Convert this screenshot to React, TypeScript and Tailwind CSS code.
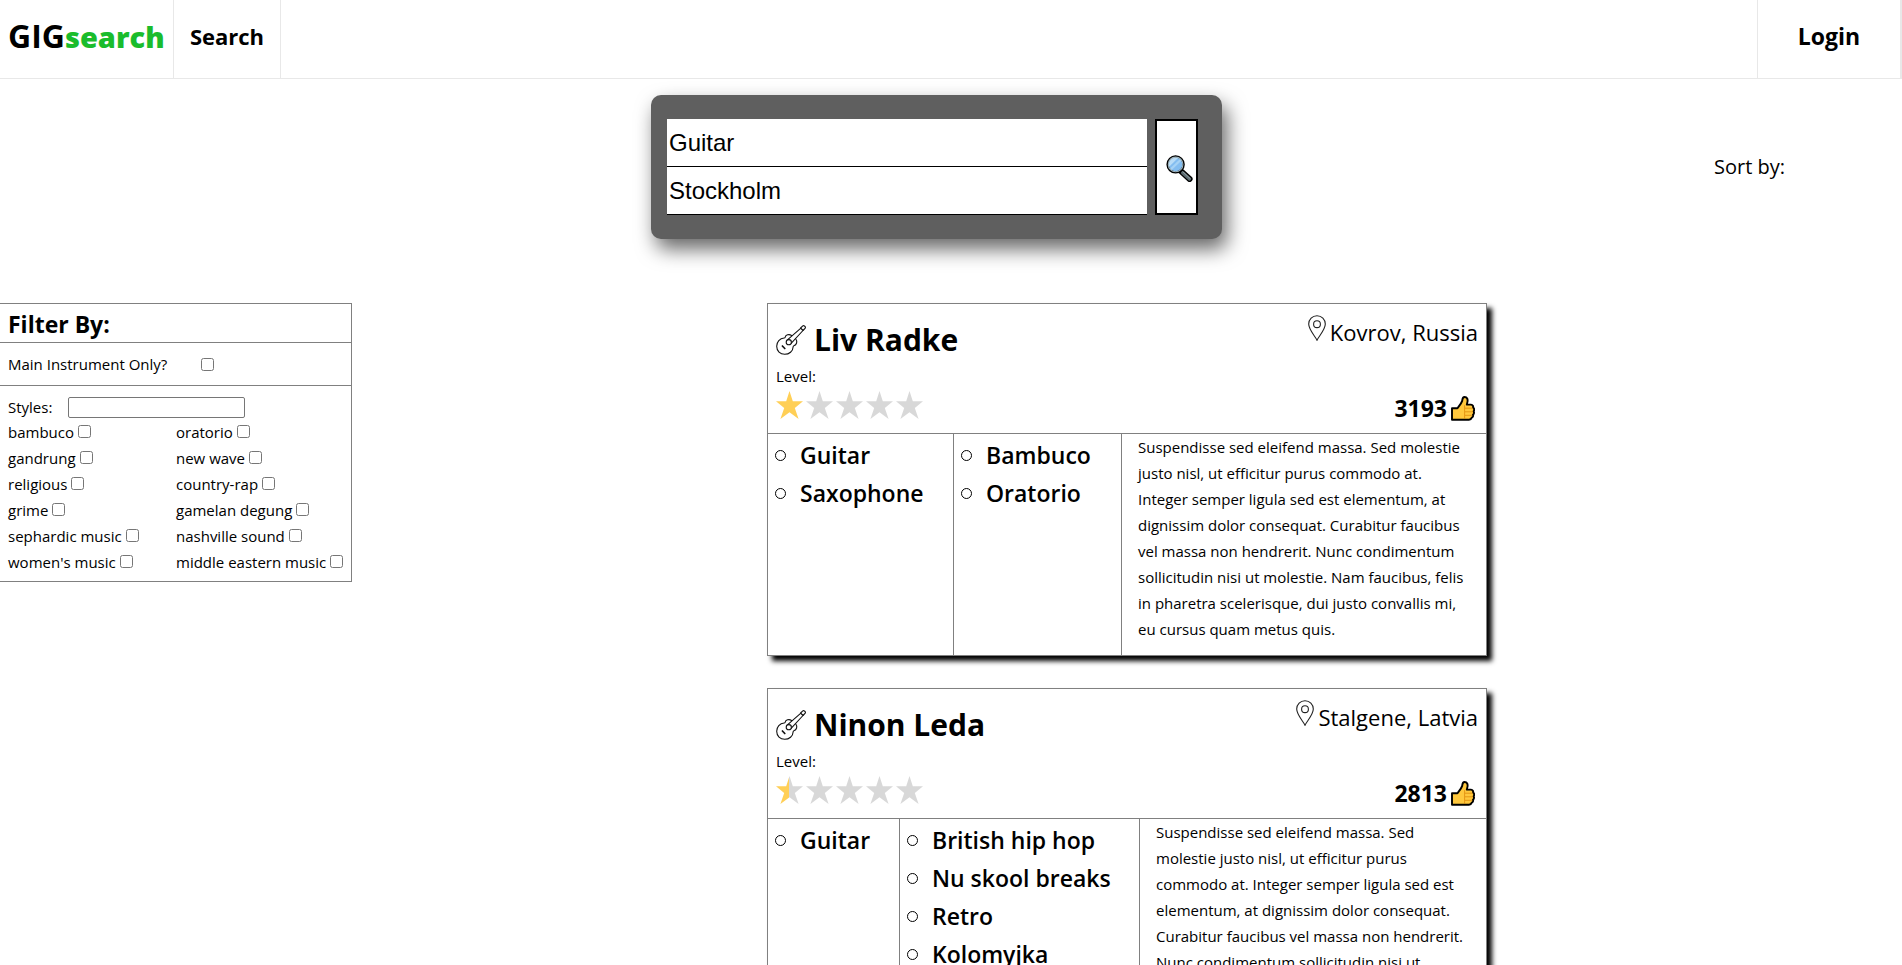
import React, { useId } from "react";

type Artist = {
  name: string;
  location: string;
  likes: number;
  level: number;
  instruments: string[];
  styles: string[];
  bio: string;
  columns: string;
};

const BIO =
  "Suspendisse sed eleifend massa. Sed molestie justo nisl, ut efficitur purus commodo at. Integer semper ligula sed est elementum, at dignissim dolor consequat. Curabitur faucibus vel massa non hendrerit. Nunc condimentum sollicitudin nisi ut molestie. Nam faucibus, felis in pharetra scelerisque, dui justo convallis mi, eu cursus quam metus quis.";

const artists: Artist[] = [
  {
    name: "Liv Radke",
    location: "Kovrov, Russia",
    likes: 3193,
    level: 1,
    instruments: ["Guitar", "Saxophone"],
    styles: ["Bambuco", "Oratorio"],
    bio: BIO,
    columns: "grid-cols-[186px_168px_1fr]",
  },
  {
    name: "Ninon Leda",
    location: "Stalgene, Latvia",
    likes: 2813,
    level: 0.5,
    instruments: ["Guitar"],
    styles: ["British hip hop", "Nu skool breaks", "Retro", "Kolomyjka"],
    bio: BIO,
    columns: "grid-cols-[132px_240px_1fr]",
  },
];

const styleFilters = [
  "bambuco",
  "oratorio",
  "gandrung",
  "new wave",
  "religious",
  "country-rap",
  "grime",
  "gamelan degung",
  "sephardic music",
  "nashville sound",
  "women's music",
  "middle eastern music",
];

function GuitarIcon() {
  return (
    <svg width="30" height="30" viewBox="0 0 30 30" fill="none" stroke="#111" strokeWidth="1.1" strokeLinecap="round" strokeLinejoin="round" aria-hidden="true">
      <path d="M15.6 10.4C12.8 8.8 9.7 9.9 9.1 12.3C9 12.8 8.6 13 8.1 13C3.8 13.2.7 16.8.7 21.2C.7 26 4.2 29.3 8.7 29.3C13.2 29.3 17 26.2 17.1 21.9C17.1 21.3 17.4 21 17.9 20.8C20.6 19.8 21.8 16.6 19.8 14" />
      <path d="M11.4 14.8L24.6 3.3M15.1 18.4L27 5.5" />
      <circle cx="12.8" cy="17.2" r="2.6" fill="#fff" />
      <path d="M24.6 3L26.8.9C27.4.4 28 .5 28.6 1.1L29 1.5C29.6 2.1 29.6 2.8 29 3.4L27 5.5Z" fill="#fff" />
      <path d="M6.4 21L8.8 23.5" strokeWidth="1.7" />
    </svg>
  );
}

function PinIcon() {
  return (
    <svg width="18" height="26" viewBox="0 0 18 26" fill="none" stroke="#222" strokeWidth="1.1" aria-hidden="true">
      <path d="M9 25.2C7.6 21.9.7 14.9.7 9.1C.7 4.2 4.4.7 9 .7C13.6.7 17.3 4.2 17.3 9.1C17.3 14.9 10.4 21.9 9 25.2Z" />
      <circle cx="9" cy="9.2" r="3.4" />
    </svg>
  );
}

function ThumbIcon() {
  return (
    <svg width="24" height="25" viewBox="0 0 24 25" aria-hidden="true">
      <path d="M1 12.2H6.4C8.3 9.8 10.4 7.5 11.2 4.9C11.4 3 11.4 1 13.6 1C16.2 1 16.9 3.4 16.5 5.6L15.8 8.6H20C21.9 8.6 22.4 10.5 22.1 11.6C23.3 12.6 23.3 14.3 22.6 15.3C23.3 16.6 22.9 18 22 18.8C22.4 20 21.8 21.2 20.8 21.7C20.3 23 19.6 23.8 18 23.8H1Z" fill="#ffc83d" stroke="#000" strokeWidth="1.9" strokeLinejoin="round" />
      <path d="M13.6 9.2V22.8M14 12.2H21.6M14 15.8H22M14 19.3H21.2" stroke="#d67d00" strokeWidth="0.9" fill="none" opacity="0.75" />
    </svg>
  );
}

function MagnifierIcon() {
  return (
    <svg width="27" height="27" viewBox="0 0 27 27" aria-hidden="true">
      <path d="M15.2 16.4L23.6 24" stroke="#000" strokeWidth="6" strokeLinecap="round" />
      <path d="M16.6 17.8L23.5 24" stroke="#5c6b70" strokeWidth="3.2" strokeLinecap="round" />
      <path d="M17 17L24 23.4" stroke="#8f9da1" strokeWidth="1" strokeLinecap="round" />
      <circle cx="9.6" cy="9.4" r="8" fill="#83bdf0" stroke="#000" strokeWidth="2.4" />
      <path d="M3.1 11.8L12 3C8.6 1.6 4.9 3 3.3 6.2C2.5 8 2.4 10 3.1 11.8Z" fill="#b8dcf7" />
      <path d="M5.5 15.2L15.6 5.6L14 4L4 13.4Z" fill="#a5d2f5" />
      <circle cx="9.6" cy="9.4" r="7.3" fill="none" stroke="#9fb4bd" strokeWidth="1.1" />
    </svg>
  );
}

function Star({ fill }: { fill: number }) {
  const id = useId();
  const offset = `${fill * 100}%`;
  return (
    <svg width="27" height="28" viewBox="0 0 27 28" aria-hidden="true">
      <defs>
        <linearGradient id={id}>
          <stop offset={offset} stopColor="#ffcf56" />
          <stop offset={offset} stopColor="#d8d8d8" />
        </linearGradient>
      </defs>
      <path d="M13.5 0L16.8 10.3H27L18.8 16.9L22.6 28L13.5 21.3L4.4 28L8.2 16.9L0 10.3H10.2Z" fill={`url(#${id})`} />
    </svg>
  );
}

function CircleList({ items }: { items: string[] }) {
  return (
    <ul className="border-r border-[#808080] pt-[2px] pl-[7px] text-[23px] leading-[38px] font-semibold">
      {items.map((item) => (
        <li key={item} className="flex items-center gap-[14px] whitespace-nowrap">
          <span className="size-[11px] rounded-full border border-black" />
          {item}
        </li>
      ))}
    </ul>
  );
}

function ArtistCard({ artist }: { artist: Artist }) {
  return (
    <article className="w-full max-w-[720px] border border-[#808080] bg-white shadow-[5px_5px_5px_#000]">
      <header className="flex justify-between border-b border-[#808080] px-2 pb-2">
        <div className="pt-[13px] pb-[6px]">
          <h2 className="flex items-center gap-2 text-[30px] leading-[46px] font-bold">
            <GuitarIcon />
            {artist.name}
          </h2>
          <p className="text-[15px] leading-[26px]">Level:</p>
          <div className="flex gap-[3px] pt-[2px]" role="img" aria-label={`${artist.level} of 5`}>
            {[0, 1, 2, 3, 4].map((i) => (
              <Star key={i} fill={Math.max(0, Math.min(1, artist.level - i))} />
            ))}
          </div>
        </div>
        <div className="flex flex-col items-end justify-between pt-[11px]">
          <p className="flex items-start gap-1 text-[22px] leading-[34px]">
            <PinIcon />
            {artist.location}
          </p>
          <button type="button" className="flex items-center gap-1 pr-[3px] text-[23px] leading-[34px] font-bold">
            {artist.likes}
            <ThumbIcon />
          </button>
        </div>
      </header>
      <div className={`grid ${artist.columns}`}>
        <CircleList items={artist.instruments} />
        <CircleList items={artist.styles} />
        <p className="px-4 pb-[13px] text-[15px] leading-[26px]">{artist.bio}</p>
      </div>
    </article>
  );
}

const checkbox = "size-[13px] shrink-0";

export default function App() {
  return (
    <div className="h-screen overflow-hidden bg-white font-['Open_Sans',sans-serif] text-black">
      <nav className="flex h-[79px] items-stretch border-b border-[#e8e8e8]">
        <a href="#home" className="flex w-[174px] items-center border-r border-[#e8e8e8] pb-[6px] pl-2 text-[32px] font-bold">
          <span className="flex items-baseline">
            GIG<span className="text-[29px] font-extrabold text-[#1abc2c]">search</span>
          </span>
        </a>
        <a href="#search" className="flex w-[107px] items-center justify-center border-r border-[#e8e8e8] pb-[6px] text-[22px] font-bold">
          Search
        </a>
        <a href="#login" className="ml-auto flex w-[145px] items-center justify-center border-r-2 border-l border-[#e8e8e8] pb-[6px] text-[23px] font-bold">
          Login
        </a>
      </nav>

      <div className="grid grid-cols-[1fr_571px_1fr] items-center pt-4 pr-[29px]">
        <div />
        <form className="flex gap-2 rounded-[10px] bg-[#5f5f5f] py-6 pr-6 pl-4 shadow-[5px_10px_20px_rgba(0,0,0,0.6)]" onSubmit={(e) => e.preventDefault()}>
          <div className="flex flex-1 flex-col font-['Liberation_Sans',sans-serif] text-[24px]">
            <input aria-label="Instrument" defaultValue="Guitar" className="h-12 border-b border-black bg-white px-[2px]" />
            <input aria-label="Location" defaultValue="Stockholm" className="h-12 border-b border-black bg-white px-[2px]" />
          </div>
          <button type="submit" aria-label="Search" className="flex w-[43px] items-center justify-end border-2 border-black bg-white pt-[2px] pr-[3px]">
            <MagnifierIcon />
          </button>
        </form>
        <p className="pr-[88px] text-right text-[20px]">Sort by:</p>
      </div>

      <div className="flex items-start pt-16">
        <aside className="w-[352px] shrink-0 border-y border-r border-[#808080] text-[15px]">
          <h2 className="border-b border-[#808080] pt-[2px] pl-2 text-[23px] leading-[36px] font-bold">Filter By:</h2>
          <div className="flex h-[43px] items-center gap-[34px] border-b border-[#808080] pl-2">
            <label htmlFor="main-only">Main Instrument Only?</label>
            <input id="main-only" type="checkbox" className={checkbox} />
          </div>
          <div className="px-2 pt-[10px] pb-[6px]">
            <div className="flex items-center gap-4">
              <label htmlFor="styles">Styles:</label>
              <input id="styles" type="text" className="h-[21px] w-[177px] rounded-[2px] border border-[#767676]" />
            </div>
            <div className="grid grid-cols-[168px_1fr]">
              {styleFilters.map((s) => (
                <label key={s} className="flex items-center gap-1 leading-[26px] whitespace-nowrap">
                  {s}
                  <input type="checkbox" className={checkbox} />
                </label>
              ))}
            </div>
          </div>
        </aside>
        <main className="flex flex-1 flex-col items-center gap-8">
          {artists.map((a) => (
            <ArtistCard key={a.name} artist={a} />
          ))}
        </main>
      </div>
    </div>
  );
}
